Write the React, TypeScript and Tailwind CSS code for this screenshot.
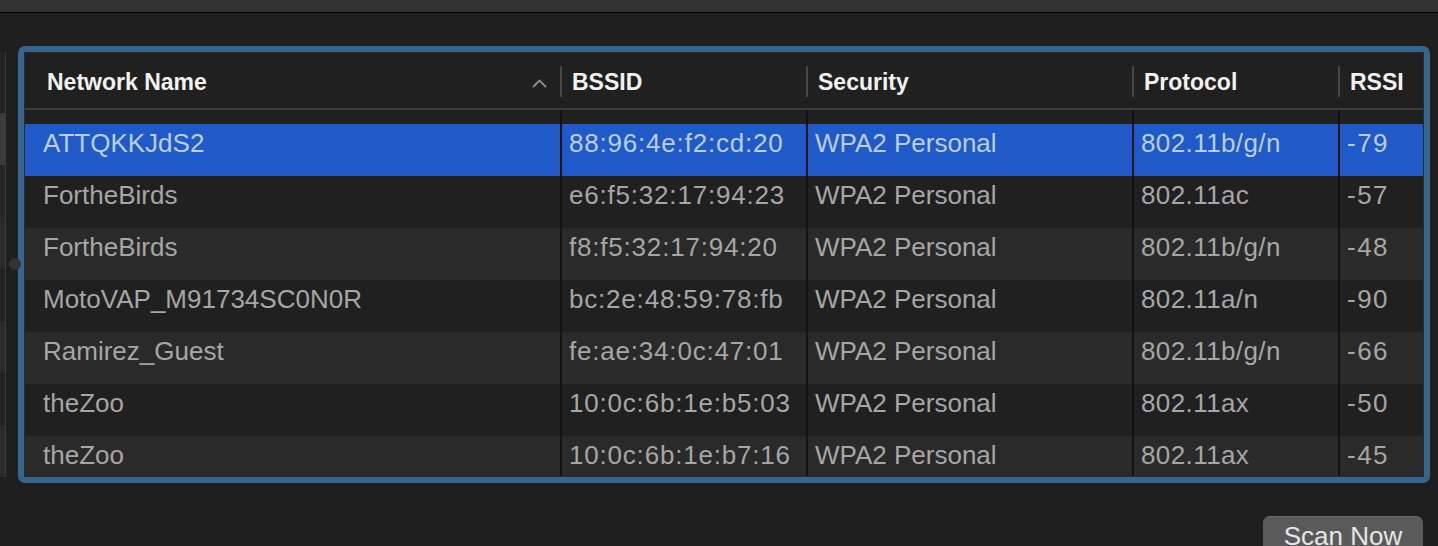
import React from "react";

const rows = [
  ["ATTQKKJdS2", "88:96:4e:f2:cd:20", "WPA2 Personal", "802.11b/g/n", "-79"],
  ["FortheBirds", "e6:f5:32:17:94:23", "WPA2 Personal", "802.11ac", "-57"],
  ["FortheBirds", "f8:f5:32:17:94:20", "WPA2 Personal", "802.11b/g/n", "-48"],
  ["MotoVAP_M91734SC0N0R", "bc:2e:48:59:78:fb", "WPA2 Personal", "802.11a/n", "-90"],
  ["Ramirez_Guest", "fe:ae:34:0c:47:01", "WPA2 Personal", "802.11b/g/n", "-66"],
  ["theZoo", "10:0c:6b:1e:b5:03", "WPA2 Personal", "802.11ax", "-50"],
  ["theZoo", "10:0c:6b:1e:b7:16", "WPA2 Personal", "802.11ax", "-45"],
];

const widths = ["w-[537px]", "w-[246px]", "w-[326px]", "w-[206px]", "flex-1"];
const tracking = ["", "tracking-[0.8px]", "", "tracking-[0.4px]", "tracking-[1.5px]"];

function HeaderCell({ label, idx, sort }: { label: string; idx: number; sort?: boolean }) {
  const last = idx === 4;
  return (
    <div className={`${widths[idx]} relative h-full flex items-start ${idx === 0 ? "pl-[22px]" : "pl-[10px]"}`}>
      <span className="pt-[16px] leading-[26px] text-[23px] font-bold text-[#f2f2f2]">{label}</span>
      {sort && (
        <svg className="absolute left-[507px] top-[26px]" width="15" height="9" viewBox="0 0 15 9" fill="none">
          <path d="M1.5 7.5 L7.5 1.5 L13.5 7.5" stroke="#8c8c8c" strokeWidth="1.8" strokeLinecap="round" strokeLinejoin="round" />
        </svg>
      )}
      {!last && <div className="absolute right-0 top-[13px] h-[31px] w-[2px] bg-[#474747]" />}
    </div>
  );
}

function Row({ cells, i }: { cells: string[]; i: number }) {
  const selected = i === 0;
  const bg = selected ? "bg-[#1f5ac8]" : i % 2 === 1 ? "bg-[#202020]" : "bg-[#2a2a2a]";
  const color = selected ? "text-[#bccdee]" : "text-[#a6a6a6]";
  return (
    <div className={`flex h-[52px] shrink-0 ${bg}`}>
      {cells.map((c, j) => (
        <div
          key={j}
          className={`${widths[j]} h-full ${j < 4 ? "border-r-2 border-[#121212]" : ""} ${j === 0 ? "pl-[18px]" : "pl-[7px]"} pt-[4px] overflow-hidden whitespace-nowrap`}
        >
          <span className={`text-[26px] leading-[30px] ${tracking[j]} ${color}`}>{c}</span>
        </div>
      ))}
    </div>
  );
}

export default function App() {
  const stripBands = [
    { h: "h-[61px]", c: "bg-[#232323]" },
    { h: "h-[52px]", c: "bg-[#3c3c3c]" },
    { h: "h-[52px]", c: "bg-[#262626]" },
    { h: "h-[52px]", c: "bg-[#2b2b2b]" },
    { h: "h-[52px]", c: "bg-[#232323]" },
    { h: "h-[52px]", c: "bg-[#2b2b2b]" },
    { h: "h-[52px]", c: "bg-[#232323]" },
    { h: "h-[52px]", c: "bg-[#2b2b2b]" },
  ];
  return (
    <div
      className="relative w-[1438px] h-[546px] overflow-hidden bg-[#1f1f1f]"
      style={{ fontFamily: '"Liberation Sans", Arial, sans-serif' }}
    >
      <div className="h-[12px] bg-[#323232]" />
      <div className="h-px bg-black" />
      <div className="flex pt-[33px]">
        <div className="mt-[6px] w-[6px] h-[425px] border-r border-[#3a3a3a] flex flex-col overflow-hidden">
          {stripBands.map((b, k) => (
            <div key={k} className={`${b.h} ${b.c} shrink-0`} />
          ))}
        </div>
        <div className="ml-[12px] w-[1412px] h-[437px] rounded-[7px] bg-[#37658f] p-[6px]">
          <div className="h-full border border-[#2b2b2b] bg-[#202020] flex flex-col overflow-hidden">
            <div className="flex h-[55px] shrink-0 bg-[#202020]">
              <HeaderCell label="Network Name" idx={0} sort />
              <HeaderCell label="BSSID" idx={1} />
              <HeaderCell label="Security" idx={2} />
              <HeaderCell label="Protocol" idx={3} />
              <HeaderCell label="RSSI" idx={4} />
            </div>
            <div className="h-[2px] shrink-0 bg-[#3d3d3d]" />
            <div className="flex h-[14px] shrink-0 bg-[#202020]">
              {widths.map((w, j) => (
                <div key={j} className={`${w} h-full ${j < 4 ? "border-r-2 border-[#121212]" : ""}`} />
              ))}
            </div>
            {rows.map((r, i) => (
              <Row key={i} cells={r} i={i} />
            ))}
          </div>
        </div>
      </div>
      <div className="flex justify-end pr-[15px] pt-[33px]">
        <div className="w-[160px] h-[44px] rounded-[7px] bg-[#5a5a5a] border-t border-[#6a6a6a] flex justify-center items-start pt-[4px]">
          <span className="text-[26px] leading-[30px] text-[#e6e6e6]">Scan Now</span>
        </div>
      </div>
      <div className="absolute left-[9px] top-[258px] w-[12px] h-[12px] rounded-full bg-[#333333]" />
    </div>
  );
}
